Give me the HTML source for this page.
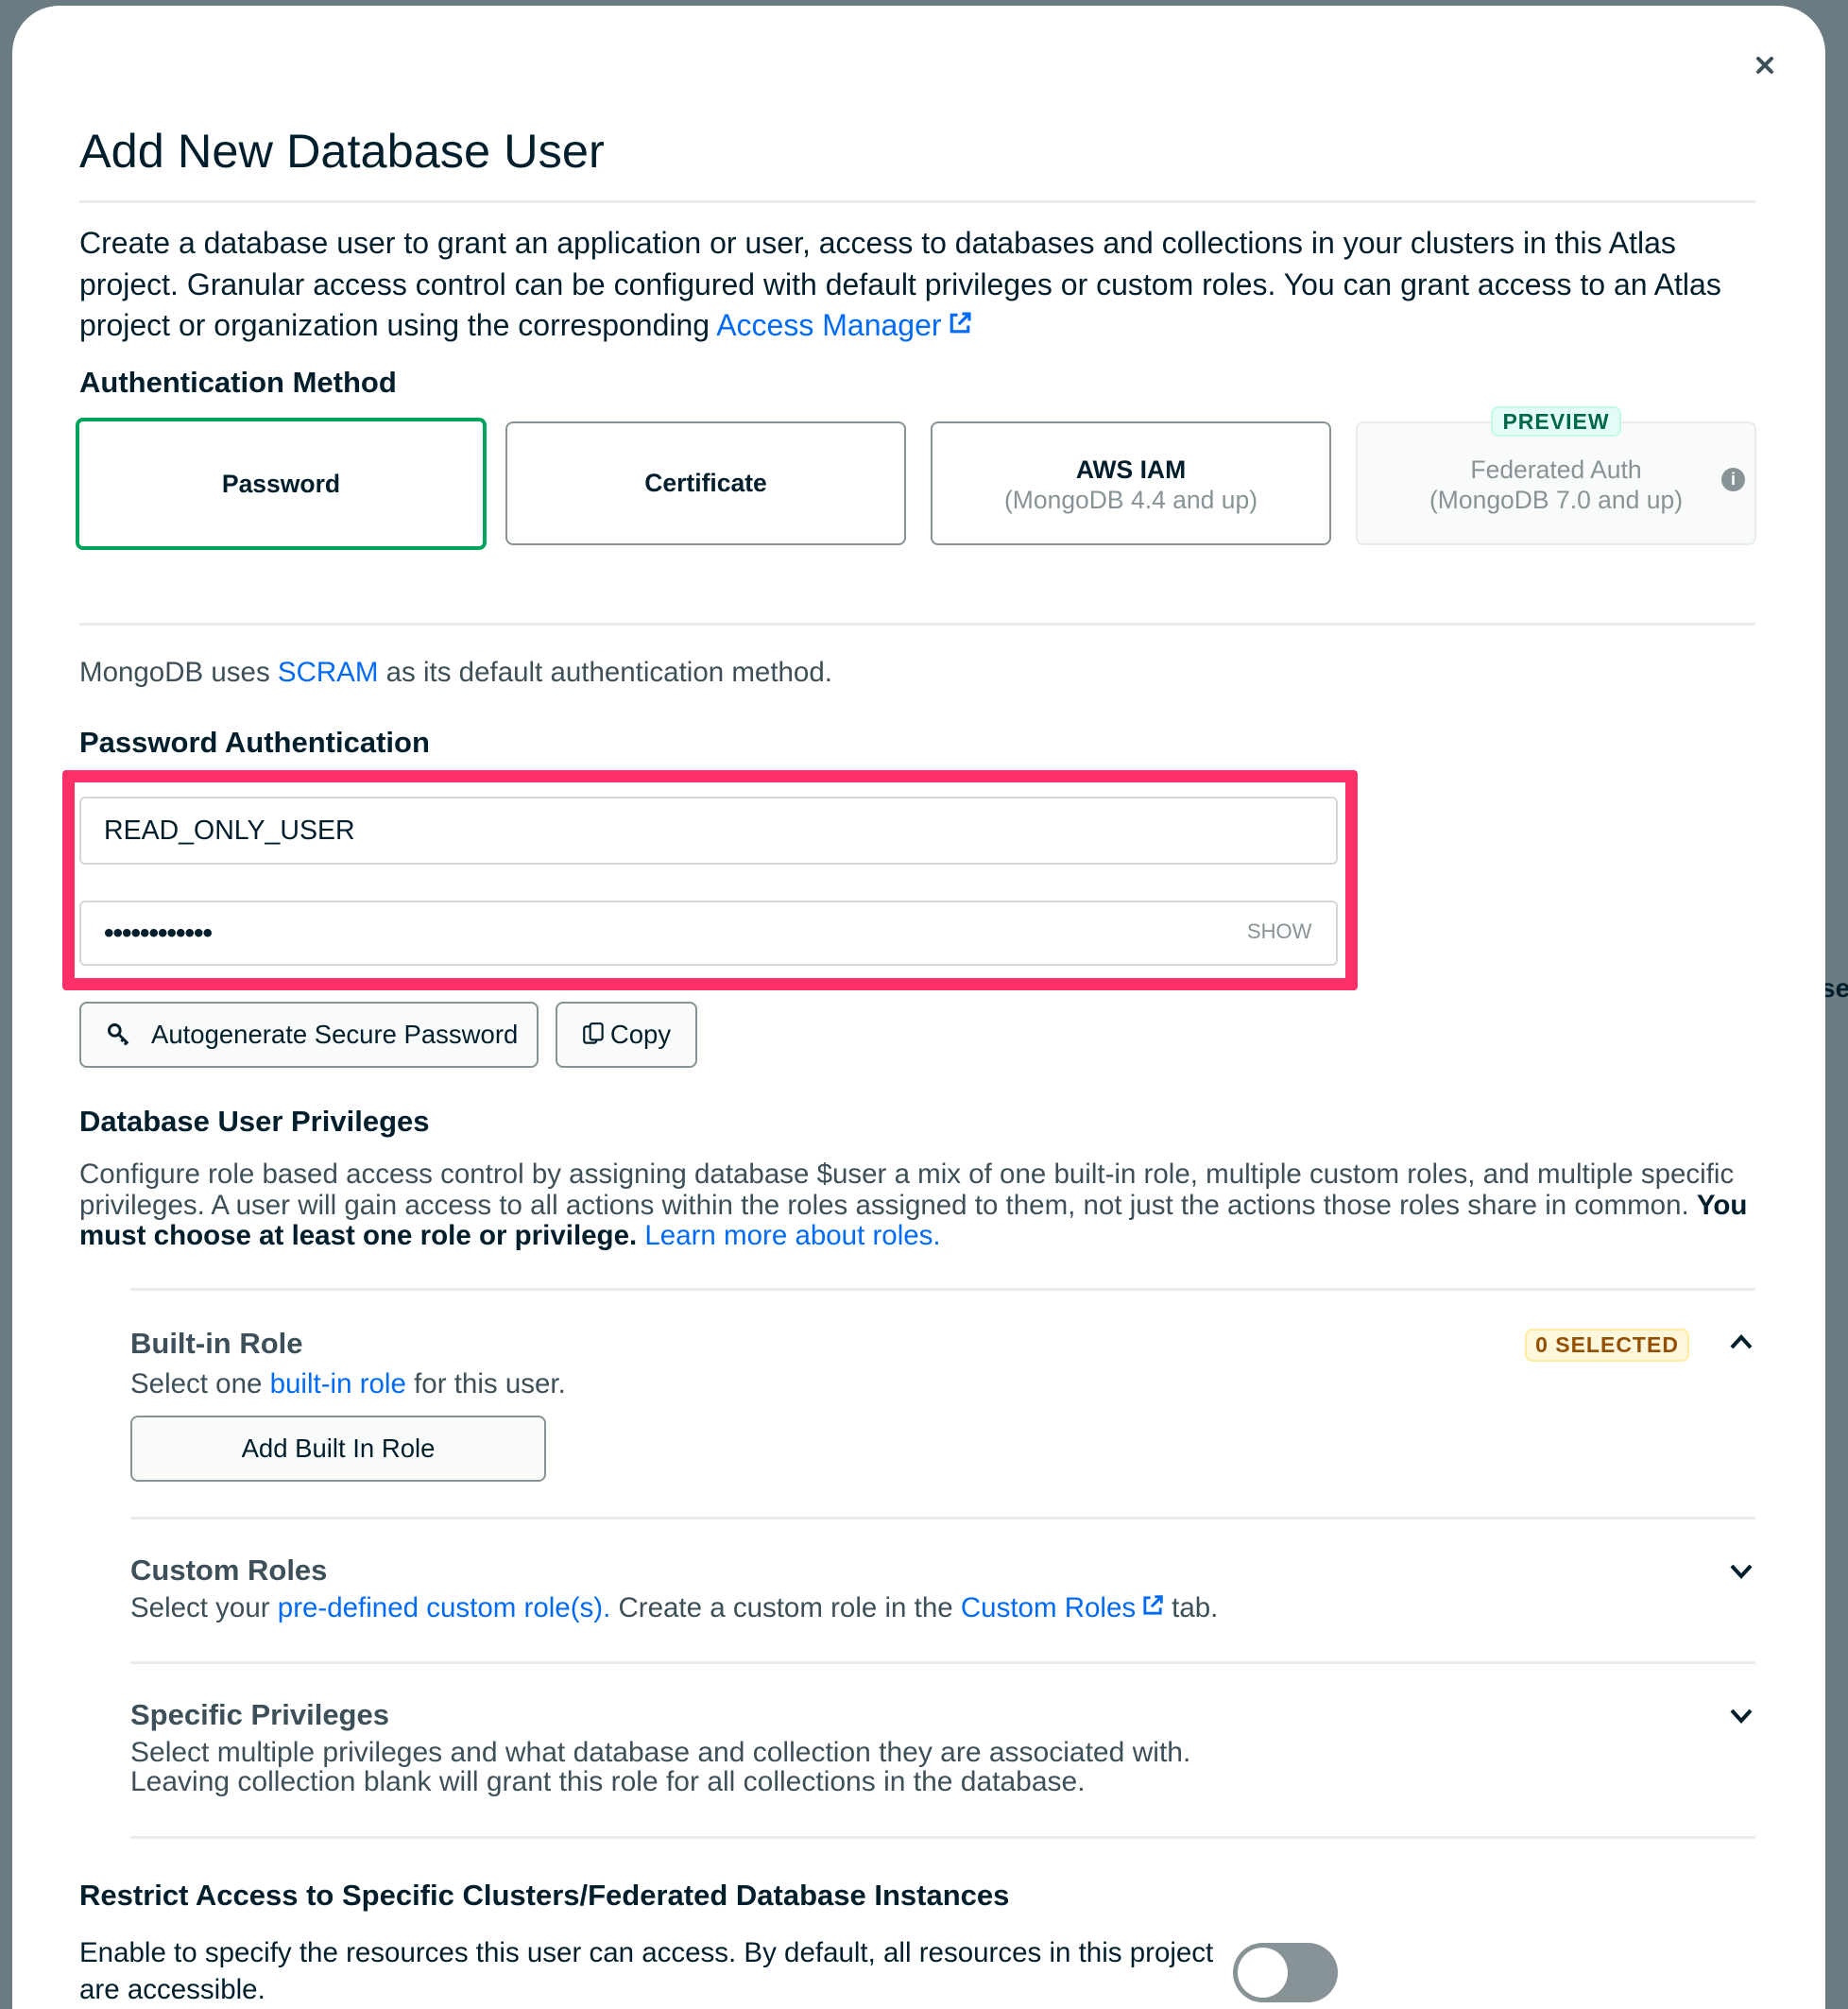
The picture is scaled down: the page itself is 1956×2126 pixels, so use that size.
<!DOCTYPE html>
<html><head><meta charset="utf-8"><style>
*{margin:0;padding:0;box-sizing:border-box}
html,body{width:1956px;height:2126px;overflow:hidden}
body{background:#6a7b82;font-family:"Liberation Sans",sans-serif;color:#001e2b;position:relative}
.modal{position:absolute;left:13px;top:6px;width:1919px;height:2120px;background:#fff;border-radius:50px 50px 0 0}
.a{position:absolute;white-space:nowrap}
.hr{position:absolute;height:3px;background:#e8edeb}
.link{color:#016bf8}
.card{position:absolute;border:2px solid #889397;border-radius:8px;text-align:center;font-size:26.5px;font-weight:bold}
.sub{font-weight:normal;color:#889397;font-size:26.5px}
.btn{position:absolute;border:2px solid #889397;border-radius:8px;background:#f9fbfa;font-size:27.5px;display:flex;align-items:center;justify-content:center}
.inp{position:absolute;border:2px solid #d3d9d9;border-radius:6px;background:#fff}
.h3{font-size:31px;font-weight:bold}
.gr{color:#3d4f58}
</style></head><body>
<div class="a" style="left:1927px;top:1030px;font-size:28px;font-weight:bold;color:#001e2b">se</div>
<div class="modal"></div>
<svg class="a" style="left:1858px;top:59px" width="20" height="20" viewBox="0 0 20 20"><path d="M3 3L17 17M17 3L3 17" stroke="#3d4f58" stroke-width="4" stroke-linecap="round"/></svg>
<div class="a" style="left:84px;top:130px;font-size:50.5px">Add New Database User</div>
<div class="hr" style="left:84px;top:212px;width:1774px"></div>
<div class="a" style="left:84px;top:236px;font-size:32px;line-height:43.5px">Create a database user to grant an application or user, access to databases and collections in your clusters in this Atlas<br>project. Granular access control can be configured with default privileges or custom roles. You can grant access to an Atlas<br>project or organization using the corresponding <span class="link">Access Manager</span><svg width="30" height="30" viewBox="0 0 24 24" style="vertical-align:-2px;margin-left:4px"><path d="M10 5H5v14h14v-5M14 4h6v6M20 4l-9 9" stroke="#016bf8" stroke-width="2.5" fill="none"/></svg></div>
<div class="a h3" style="left:84px;top:387px">Authentication Method</div>
<div class="card" style="left:80px;top:442px;width:435px;height:140px;border:4px solid #00a35c;line-height:132px">Password</div>
<div class="card" style="left:535px;top:446px;width:424px;height:131px;line-height:127px">Certificate</div>
<div class="card" style="left:985px;top:446px;width:424px;height:131px;padding-top:33px;line-height:32px">AWS IAM<br><span class="sub">(MongoDB 4.4 and up)</span></div>
<div class="card" style="left:1435px;top:446px;width:424px;height:131px;padding-top:33px;line-height:32px;border-color:#e8edeb;background:#f9fbfa;font-weight:normal;color:#889397">Federated Auth<br>(MongoDB 7.0 and up)</div>
<div class="a" style="left:1822px;top:495px;width:25px;height:25px;border-radius:50%;background:#889397;color:#fff;font-size:18px;font-weight:bold;text-align:center;line-height:25px">i</div>
<div class="a" style="left:1578px;top:430px;width:138px;height:32px;background:#e3fcf7;border:2px solid #c0fae6;border-radius:8px;color:#00684a;font-size:23px;font-weight:bold;text-align:center;line-height:28px;letter-spacing:1px">PREVIEW</div>
<div class="hr" style="left:84px;top:659px;width:1774px"></div>
<div class="a gr" style="left:84px;top:695px;font-size:29.5px">MongoDB uses <span class="link">SCRAM</span> as its default authentication method.</div>
<div class="a h3" style="left:84px;top:768px">Password Authentication</div>
<div class="a" style="left:66px;top:815px;width:1371px;height:233px;border:13px solid #ff3068;border-radius:4px"></div>
<div class="inp" style="left:84px;top:843px;width:1332px;height:72px"></div>
<div class="a" style="left:110px;top:863px;font-size:28.5px">READ_ONLY_USER</div>
<div class="inp" style="left:84px;top:953px;width:1332px;height:69px"></div>
<div class="a" style="left:110px;top:971px;font-size:30px;font-weight:bold;letter-spacing:-1px">••••••••••••</div>
<div class="a" style="left:1320px;top:973px;font-size:22px;color:#889397">SHOW</div>
<div class="btn" style="left:84px;top:1060px;width:486px;height:70px;justify-content:flex-start;padding-left:26px"><svg width="28" height="28" viewBox="0 0 24 24"><circle cx="8" cy="8" r="5" fill="none" stroke="#001e2b" stroke-width="2.5"/><path d="M11.5 11.5L20 20M16 16l-2 2M19 19l-2 2" stroke="#001e2b" stroke-width="2.5"/></svg><span style="margin-left:20px">Autogenerate Secure Password</span></div>
<div class="btn" style="left:588px;top:1060px;width:150px;height:70px"><svg width="26" height="28" viewBox="0 0 24 26"><rect x="2" y="5" width="12" height="16" rx="2" fill="none" stroke="#001e2b" stroke-width="2"/><rect x="8" y="2" width="12" height="16" rx="2" fill="#fff" stroke="#001e2b" stroke-width="2"/></svg><span style="margin-left:4px">Copy</span></div>
<div class="a h3" style="left:84px;top:1169px">Database User Privileges</div>
<div class="a gr" style="left:84px;top:1227px;font-size:29.5px;line-height:32.5px">Configure role based access control by assigning database $user a mix of one built-in role, multiple custom roles, and multiple specific<br>privileges. A user will gain access to all actions within the roles assigned to them, not just the actions those roles share in common. <b style="color:#001e2b">You</b><br><b style="color:#001e2b">must choose at least one role or privilege.</b> <span class="link">Learn more about roles.</span></div>
<div class="hr" style="left:138px;top:1363px;width:1720px"></div>
<div class="a h3 gr" style="left:138px;top:1404px">Built-in Role</div>
<div class="a gr" style="left:138px;top:1448px;font-size:29.5px">Select one <span class="link">built-in role</span> for this user.</div>
<div class="a" style="left:1614px;top:1406px;width:174px;height:35px;background:#fef7db;border:2px solid #ffec9e;border-radius:8px;color:#944f01;font-size:23px;font-weight:bold;text-align:center;line-height:31px;letter-spacing:1px">0 SELECTED</div>
<svg class="a" style="left:1830px;top:1410px" width="26" height="20" viewBox="0 0 26 20"><path d="M3 16L13 5L23 16" stroke="#001e2b" stroke-width="4" fill="none"/></svg>
<div class="btn" style="left:138px;top:1498px;width:440px;height:70px">Add Built In Role</div>
<div class="hr" style="left:138px;top:1605px;width:1720px"></div>
<div class="a h3 gr" style="left:138px;top:1644px">Custom Roles</div>
<div class="a gr" style="left:138px;top:1685px;font-size:29.5px">Select your <span class="link">pre-defined custom role(s).</span> Create a custom role in the <span class="link">Custom Roles</span><svg width="28" height="28" viewBox="0 0 24 24" style="vertical-align:-2px;margin:0 6px 0 4px"><path d="M10 5H5v14h14v-5M14 4h6v6M20 4l-9 9" stroke="#016bf8" stroke-width="2.5" fill="none"/></svg>tab.</div>
<svg class="a" style="left:1830px;top:1653px" width="26" height="20" viewBox="0 0 26 20"><path d="M3 4L13 15L23 4" stroke="#001e2b" stroke-width="4" fill="none"/></svg>
<div class="hr" style="left:138px;top:1758px;width:1720px"></div>
<div class="a h3 gr" style="left:138px;top:1797px">Specific Privileges</div>
<div class="a gr" style="left:138px;top:1839px;font-size:30px;line-height:31px">Select multiple privileges and what database and collection they are associated with.<br>Leaving collection blank will grant this role for all collections in the database.</div>
<svg class="a" style="left:1830px;top:1806px" width="26" height="20" viewBox="0 0 26 20"><path d="M3 4L13 15L23 4" stroke="#001e2b" stroke-width="4" fill="none"/></svg>
<div class="hr" style="left:138px;top:1943px;width:1720px"></div>
<div class="a h3" style="left:84px;top:1988px">Restrict Access to Specific Clusters/Federated Database Instances</div>
<div class="a" style="left:84px;top:2047px;font-size:29.5px;line-height:39px">Enable to specify the resources this user can access. By default, all resources in this project<br>are accessible.</div>
<div class="a" style="left:1305px;top:2056px;width:111px;height:63px;border-radius:32px;background:#889397"></div>
<div class="a" style="left:1310px;top:2061px;width:53px;height:53px;border-radius:50%;background:#fff"></div>
</body></html>
